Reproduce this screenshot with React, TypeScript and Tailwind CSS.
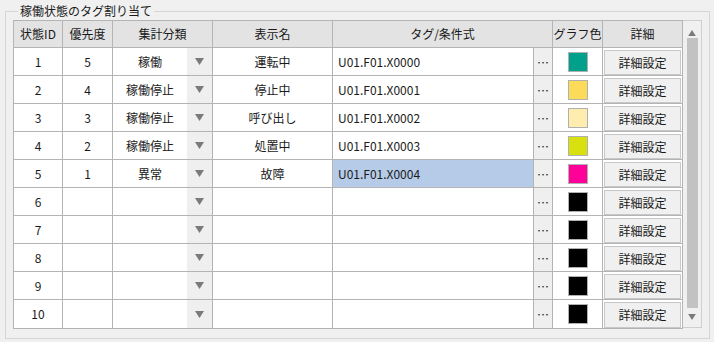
import React from "react";

type Row = {
  id: number;
  priority?: number;
  category?: string;
  label?: string;
  tag?: string;
  color: string;
  selected?: boolean;
};

const ROWS: Row[] = [
  { id: 1, priority: 5, category: "稼働", label: "運転中", tag: "U01.F01.X0000", color: "#00a08a" },
  { id: 2, priority: 4, category: "稼働停止", label: "停止中", tag: "U01.F01.X0001", color: "#fcdb5a" },
  { id: 3, priority: 3, category: "稼働停止", label: "呼び出し", tag: "U01.F01.X0002", color: "#ffedb0" },
  { id: 4, priority: 2, category: "稼働停止", label: "処置中", tag: "U01.F01.X0003", color: "#d8e010" },
  { id: 5, priority: 1, category: "異常", label: "故障", tag: "U01.F01.X0004", color: "#ff0099", selected: true },
  { id: 6, color: "#000000" },
  { id: 7, color: "#000000" },
  { id: 8, color: "#000000" },
  { id: 9, color: "#000000" },
  { id: 10, color: "#000000" },
];

const font = { fontFamily: '"Noto Sans CJK JP", "Noto Sans", sans-serif' };

function Triangle({ up = false, size = 9 }: { up?: boolean; size?: number }) {
  return (
    <svg width={size} height={size - 2} viewBox="0 0 9 7" className="block">
      {up ? <polygon points="4.5,0 9,7 0,7" fill="#7a7a7a" /> : <polygon points="0,0 9,0 4.5,7" fill="#7a7a7a" />}
    </svg>
  );
}

export default function App() {
  return (
    <div className="h-[342px] w-[714px] bg-[#f0f0f0] pl-[5px] pt-[3px] text-[12px] text-[#1a1a1a]" style={font}>
      <fieldset className="h-[336px] w-[705px] border border-[#d5d5d5] pl-[7px] pt-[1px]">
        <legend className="ml-[5px] px-[2px] text-[12px] leading-[16px]">稼働状態のタグ割り当て</legend>

        <div className="flex">
          {/* grid */}
          <div className="border-l border-t border-b border-[#b4b4b4] bg-white">
            {/* header */}
            <div className="flex h-[27px] border-b border-[#b4b4b4] bg-[#e3e3e3] leading-[26px]">
              <div className="w-[49px] border-r border-[#b4b4b4] text-center">状態ID</div>
              <div className="w-[50px] border-r border-[#b4b4b4] text-center">優先度</div>
              <div className="w-[100px] border-r border-[#b4b4b4] text-center">集計分類</div>
              <div className="w-[120px] border-r border-[#b4b4b4] text-center">表示名</div>
              <div className="w-[220px] border-r border-[#b4b4b4] text-center">タグ/条件式</div>
              <div className="w-[50px] border-r border-[#b4b4b4] text-center">グラフ色</div>
              <div className="w-[80px] border-r border-[#b4b4b4] text-center">詳細</div>
            </div>

            {ROWS.map((r, i) => (
              <div
                key={r.id}
                className={`flex h-[28px] leading-[27px] ${i < ROWS.length - 1 ? "border-b border-[#b4b4b4]" : "h-[27px]"}`}
              >
                <div className="w-[49px] border-r border-[#b4b4b4] text-center">{r.id}</div>
                <div className="w-[50px] border-r border-[#b4b4b4] text-center">{r.priority ?? ""}</div>
                <div className="flex w-[100px] border-r border-[#b4b4b4]">
                  <div className="w-[74px] text-center">{r.category ?? ""}</div>
                  <div className="flex w-[25px] items-center justify-center bg-[#efefef]">
                    <Triangle />
                  </div>
                </div>
                <div className="w-[120px] border-r border-[#b4b4b4] text-center">{r.label ?? ""}</div>
                <div className="flex w-[220px] border-r border-[#b4b4b4]">
                  <div className={`w-[201px] border-r border-[#b4b4b4] pl-[5px] ${r.selected ? "bg-[#b5cbe8]" : ""}`}>
                    {r.tag ?? ""}
                  </div>
                  <div className="w-[18px] bg-[#efefef] text-center leading-[30px]">…</div>
                </div>
                <div className="flex w-[50px] items-center justify-center border-r border-[#b4b4b4]">
                  <div className="h-[20px] w-[20px] border border-[#b0b0b0]" style={{ backgroundColor: r.color }} />
                </div>
                <div className="w-[80px] border-r border-[#b4b4b4] p-px">
                  <button className="h-full w-full border border-[#c8c8c8] bg-[#f0f0f0] leading-[24px]">詳細設定</button>
                </div>
              </div>
            ))}
          </div>

          {/* scrollbar */}
          <div className="flex h-[308px] w-[19px] flex-col items-center border-t border-r border-b border-[#cfcfcf] bg-[#f0f0f0]">
            <div className="flex h-[17px] items-end justify-center pb-[2px]">
              <Triangle up size={8} />
            </div>
            <div className="h-[270px] w-[11px] bg-[#c2c2c2]" />
            <div className="flex h-[17px] items-center justify-center">
              <Triangle size={8} />
            </div>
          </div>
        </div>
      </fieldset>
    </div>
  );
}
